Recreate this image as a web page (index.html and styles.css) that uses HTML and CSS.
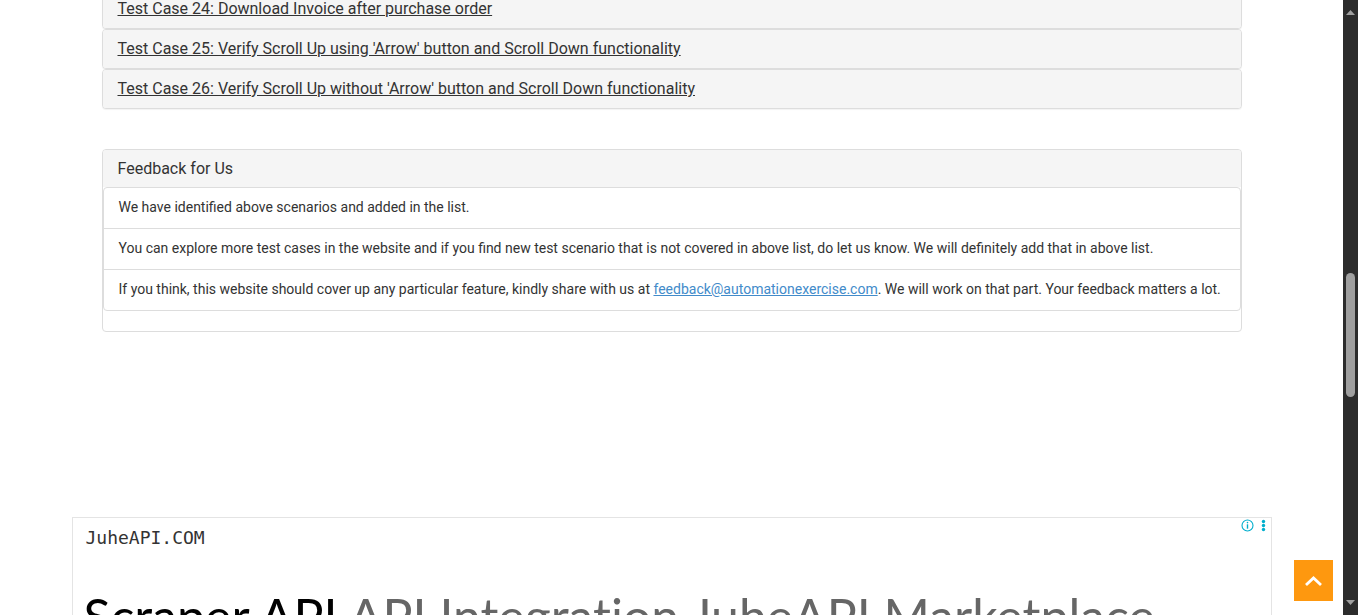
FILE: index.html
```html
<!DOCTYPE html>
<html lang="en">
<head>
<meta charset="utf-8">
<title>Test Cases</title>
<link rel="stylesheet" href="styles.css">
</head>
<body>
<div class="viewport">
  <main class="content">
    <div class="container">
      <section class="panel"><h4 class="panel-heading"><a href="#">Test Case 24: Download Invoice after purchase order</a></h4></section>
      <section class="panel"><h4 class="panel-heading"><a href="#">Test Case 25: Verify Scroll Up using 'Arrow' button and Scroll Down functionality</a></h4></section>
      <section class="panel"><h4 class="panel-heading"><a href="#">Test Case 26: Verify Scroll Up without 'Arrow' button and Scroll Down functionality</a></h4></section>
      <section class="panel feedback">
        <h4 class="panel-heading">Feedback for Us</h4>
        <ul class="list-group">
          <li>We have identified above scenarios and added in the list.</li>
          <li>You can explore more test cases in the website and if you find new test scenario that is not covered in above list, do let us know. We will definitely add that in above list.</li>
          <li>If you think, this website should cover up any particular feature, kindly share with us at <a href="mailto:feedback@automationexercise.com">feedback@automationexercise.com</a>. We will work on that part. Your feedback matters a lot.</li>
        </ul>
      </section>
    </div>
    <aside class="ad">
      <div class="ad-top">
        <span class="ad-site">JuheAPI.COM</span>
        <span class="ad-icons">
          <svg width="13" height="13" viewBox="0 0 13 13"><circle cx="6.5" cy="6.5" r="5.5" fill="none" stroke="#00aecd" stroke-width="1.1"/><path d="M6.5 5.3v4.4" fill="none" stroke="#00aecd" stroke-width="1.4"/><circle cx="6.5" cy="3.6" r=".8" fill="#00aecd"/></svg>
          <svg width="5" height="13" viewBox="0 0 5 13" fill="#00aecd"><circle cx="2.5" cy="2.5" r="1.7"/><circle cx="2.5" cy="6.5" r="1.7"/><circle cx="2.5" cy="10.5" r="1.7"/></svg>
        </span>
      </div>
      <div class="ad-title"><strong>Scraper API</strong> API Integration JuheAPI Marketplace</div>
    </aside>
  </main>
  <button class="scroll-up" type="button" aria-label="Scroll up">
    <svg width="19" height="12" viewBox="0 0 19 12"><path d="M2 10 9.5 3 17 10" fill="none" stroke="#fff" stroke-width="2.8"/></svg>
  </button>
</div>
<div class="scrollbar" aria-hidden="true">
  <svg class="arrow" width="9" height="5" viewBox="0 0 9 5"><path d="M0 5 4.5 0 9 5z" fill="#9f9f9f"/></svg>
  <div class="thumb"></div>
  <svg class="arrow" width="9" height="5" viewBox="0 0 9 5"><path d="M0 0 4.5 5 9 0z" fill="#9f9f9f"/></svg>
</div>
</body>
</html>
```
FILE: styles.css
```css
* { box-sizing: border-box; }

body {
  display: flex;
  height: 100vh;
  margin: 0;
  overflow: hidden;
  background: #fff;
  color: #333;
  font: 14px/20px Roboto, sans-serif;
}

.viewport {
  position: relative;
  flex: 1;
  min-width: 0;
  overflow: hidden;
}

/* The page is scrolled part of the way through its first visible panel. */
.content { margin-top: -11px; }

.container {
  max-width: 1140px;
  margin: 0 auto;
}

.panel {
  border: 1px solid #ddd;
  border-radius: 4px;
  background: #fff;
  box-shadow: 0 1px 1px rgba(0, 0, 0, .05);
}

.panel-heading {
  margin: 0;
  padding: 10px 15px;
  border-radius: 3px;
  background: #f5f5f5;
  font-size: 16px;
  font-weight: 400;
  line-height: 18px;
}

.panel-heading a { color: #333; }

.feedback {
  margin-top: 40px;
  padding-bottom: 20px;
  box-shadow: none;
}

.feedback .panel-heading {
  padding-bottom: 9px;
  border-radius: 3px 3px 0 0;
}

.list-group {
  margin: 0;
  padding: 0;
  border: 1px solid #ddd;
  border-radius: 4px;
  list-style: none;
}

.list-group li { padding: 9px 15px 11px; }
.list-group li + li { border-top: 1px solid #ddd; }
.list-group a { color: #428bca; }

.ad {
  max-width: 1200px;
  margin: 185px auto 0;
  border: 1px solid #e4e4e4;
}

.ad-top {
  display: flex;
  justify-content: space-between;
  padding-left: 13px;
}

.ad-site {
  padding-top: 10px;
  font: 18px/20px "DejaVu Sans Mono", monospace;
}

.ad-icons {
  display: flex;
  gap: 7px;
  padding: 1px 5px 0 0;
}

.ad-title {
  padding: 38px 11px;
  overflow: hidden;
  color: #666;
  font: 50px/60px Lato, sans-serif;
  font-variant-ligatures: none;
  white-space: nowrap;
}

.ad-title strong {
  color: #000;
  font-weight: 400;
}

.scroll-up {
  position: absolute;
  right: 10px;
  bottom: 14px;
  display: grid;
  place-items: center;
  width: 39px;
  height: 41px;
  padding: 0;
  border: 0;
  background: #fe980f;
}

.scrollbar {
  display: flex;
  flex-direction: column;
  align-items: center;
  justify-content: space-between;
  width: 15px;
  padding: 10px 0;
  background: #2c2c2c;
}

.thumb {
  width: 9px;
  height: 124px;
  margin-top: 55px;
  border-radius: 5px;
  background: #9f9f9f;
}
```
